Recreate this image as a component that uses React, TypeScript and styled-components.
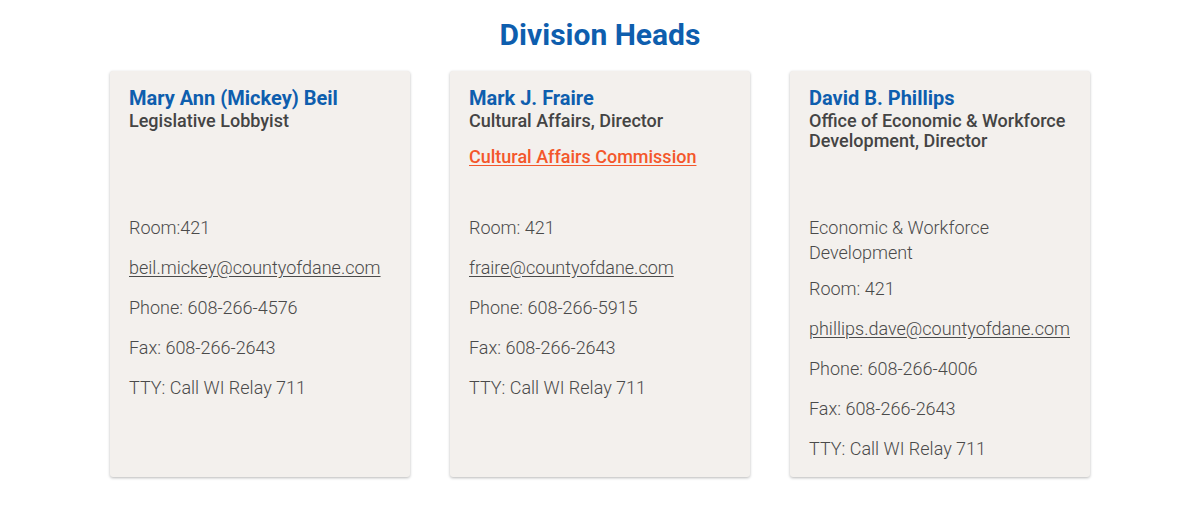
import React from "react";
import styled, { createGlobalStyle } from "styled-components";

const Global = createGlobalStyle`
  html, body { margin: 0; padding: 0; background: #ffffff; }
  body { font-family: Roboto, "Noto Sans", Arial, sans-serif; }
`;

const Section = styled.section`
  padding: 17px 0 32px;
  display: flex;
  flex-direction: column;
  align-items: center;
`;

const Title = styled.h2`
  margin: 0 0 18px;
  font-size: 30px;
  line-height: 36px;
  font-weight: 700;
  color: #0e5eae;
`;

const Grid = styled.div`
  display: grid;
  grid-template-columns: repeat(3, 300px);
  column-gap: 40px;
`;

const Card = styled.article`
  background: #f3f0ed;
  border-radius: 3px;
  box-shadow: 0 1px 3px rgba(0, 0, 0, 0.28);
  padding: 14px 20px 16px 19px;
  display: flex;
  flex-direction: column;
`;

const Header = styled.div`
  min-height: 130px;
  display: flex;
  flex-direction: column;
`;

const Name = styled.h3`
  margin: 0;
  font-size: 20px;
  line-height: 26px;
  font-weight: 700;
  color: #0e5eae;
`;

const Role = styled.div`
  font-size: 18px;
  line-height: 20px;
  font-weight: 500;
  color: #444444;
`;

const OrgLink = styled.a`
  margin-top: 14px;
  font-size: 18px;
  line-height: 24px;
  font-weight: 500;
  color: #f4572b;
  text-decoration: underline;
  text-underline-offset: 2px;
`;

const Info = styled.p<{ $tight?: boolean }>`
  margin: 0 0 ${(p) => (p.$tight ? "11px" : "15px")};
  font-size: 18px;
  line-height: 25px;
  font-weight: 300;
  color: #4a4a4a;
  &:last-child { margin-bottom: 0; }
`;

const Mail = styled.a`
  color: #4a4a4a;
  text-decoration: underline;
  text-underline-offset: 2px;
`;

type Person = {
  name: string;
  role: string;
  link?: string;
  dept?: string;
  room: string;
  email: string;
  phone: string;
};

const people: Person[] = [
  {
    name: "Mary Ann (Mickey) Beil",
    role: "Legislative Lobbyist",
    room: "Room:421",
    email: "beil.mickey@countyofdane.com",
    phone: "608-266-4576",
  },
  {
    name: "Mark J. Fraire",
    role: "Cultural Affairs, Director",
    link: "Cultural Affairs Commission",
    room: "Room: 421",
    email: "fraire@countyofdane.com",
    phone: "608-266-5915",
  },
  {
    name: "David B. Phillips",
    role: "Office of Economic & Workforce Development, Director",
    dept: "Economic & Workforce Development",
    room: "Room: 421",
    email: "phillips.dave@countyofdane.com",
    phone: "608-266-4006",
  },
];

export default function App() {
  return (
    <>
      <Global />
      <Section>
        <Title>Division Heads</Title>
        <Grid>
          {people.map((p) => (
            <Card key={p.name}>
              <Header>
                <Name>{p.name}</Name>
                <Role>{p.role}</Role>
                {p.link && <OrgLink href="#">{p.link}</OrgLink>}
              </Header>
              {p.dept && <Info $tight>{p.dept}</Info>}
              <Info>{p.room}</Info>
              <Info>
                <Mail href="#">{p.email}</Mail>
              </Info>
              <Info>Phone: {p.phone}</Info>
              <Info>Fax: 608-266-2643</Info>
              <Info>TTY: Call WI Relay 711</Info>
            </Card>
          ))}
        </Grid>
      </Section>
    </>
  );
}
